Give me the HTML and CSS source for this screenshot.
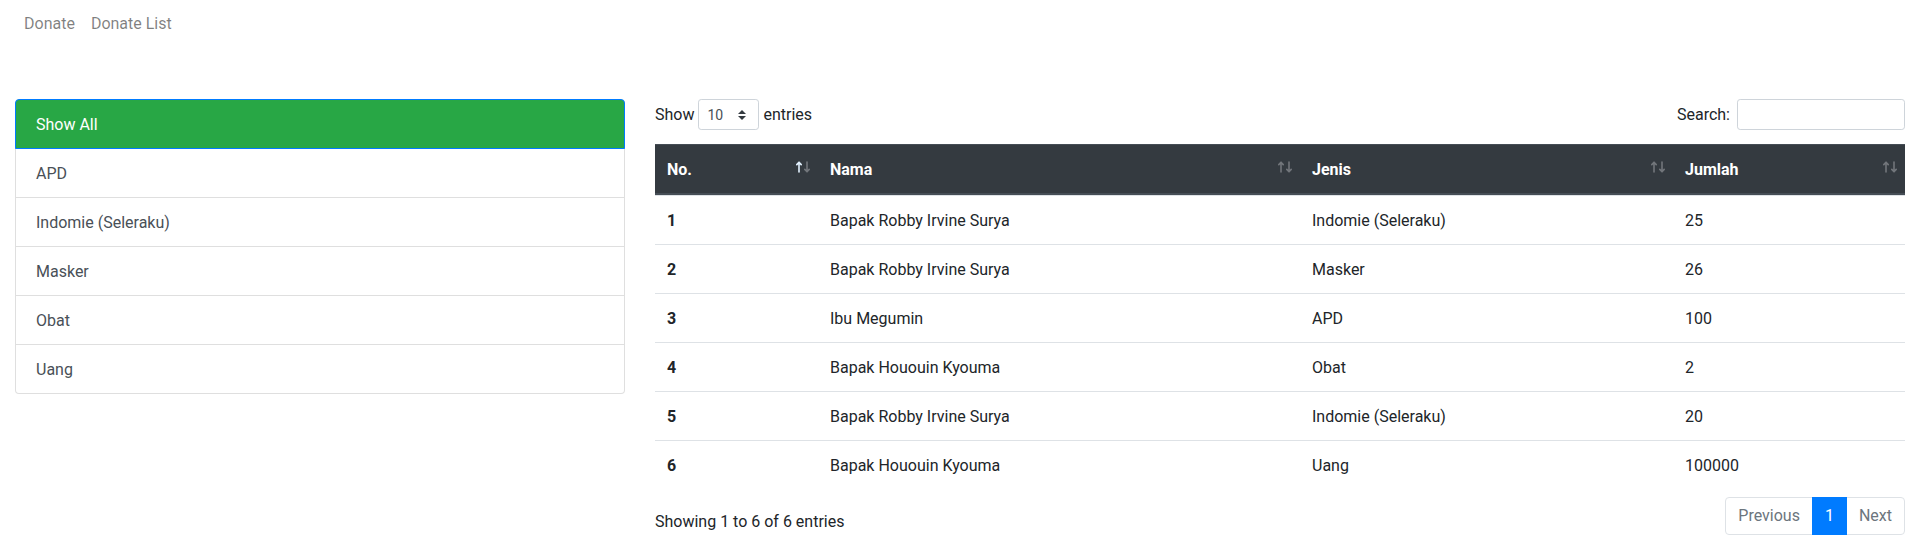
FILE: index.html
```html
<!DOCTYPE html>
<html lang="id">
<head>
<meta charset="utf-8">
<title>Donate List</title>
<link rel="stylesheet" href="styles.css">
</head>
<body>
<nav class="topnav">
  <a class="nav-link" href="#">Donate</a>
  <a class="nav-link" href="#">Donate List</a>
</nav>
<main class="layout">
  <aside class="list-group">
    <a class="list-item active" href="#">Show All</a>
    <a class="list-item" href="#">APD</a>
    <a class="list-item" href="#">Indomie (Seleraku)</a>
    <a class="list-item" href="#">Masker</a>
    <a class="list-item" href="#">Obat</a>
    <a class="list-item" href="#">Uang</a>
  </aside>
  <section class="table-wrap">
    <div class="toolbar">
      <div class="length">
        <span>Show</span>
        <div class="select-sm">
          <span>10</span>
          <svg class="select-arrow" width="8" height="10" viewBox="0 0 4 5"><path d="M2 0L0 2h4zm0 5L0 3h4z" fill="#343a40"/></svg>
        </div>
        <span>entries</span>
      </div>
      <div class="filter">
        <span>Search:</span>
        <div class="input-sm"></div>
      </div>
    </div>
    <table class="data-table">
      <colgroup>
        <col class="c-no"><col class="c-nama"><col class="c-jenis"><col class="c-jumlah">
      </colgroup>
      <thead>
        <tr>
          <th class="sort asc">No.<svg class="sort-icon" width="14" height="12" viewBox="0 0 14 12"><g fill="none" stroke-width="1.6" stroke-linecap="round" stroke-linejoin="round"><path class="up" d="M3 11V1.2M0.8 3.6L3 1.2L5.2 3.6"/><path class="down" d="M11 1V10.8M8.8 8.4L11 10.8L13.2 8.4"/></g></svg></th>
          <th class="sort">Nama<svg class="sort-icon" width="14" height="12" viewBox="0 0 14 12"><g fill="none" stroke-width="1.6" stroke-linecap="round" stroke-linejoin="round"><path class="up" d="M3 11V1.2M0.8 3.6L3 1.2L5.2 3.6"/><path class="down" d="M11 1V10.8M8.8 8.4L11 10.8L13.2 8.4"/></g></svg></th>
          <th class="sort">Jenis<svg class="sort-icon" width="14" height="12" viewBox="0 0 14 12"><g fill="none" stroke-width="1.6" stroke-linecap="round" stroke-linejoin="round"><path class="up" d="M3 11V1.2M0.8 3.6L3 1.2L5.2 3.6"/><path class="down" d="M11 1V10.8M8.8 8.4L11 10.8L13.2 8.4"/></g></svg></th>
          <th class="sort">Jumlah<svg class="sort-icon" width="14" height="12" viewBox="0 0 14 12"><g fill="none" stroke-width="1.6" stroke-linecap="round" stroke-linejoin="round"><path class="up" d="M3 11V1.2M0.8 3.6L3 1.2L5.2 3.6"/><path class="down" d="M11 1V10.8M8.8 8.4L11 10.8L13.2 8.4"/></g></svg></th>
        </tr>
      </thead>
      <tbody>
        <tr><th>1</th><td>Bapak Robby Irvine Surya</td><td>Indomie (Seleraku)</td><td>25</td></tr>
        <tr><th>2</th><td>Bapak Robby Irvine Surya</td><td>Masker</td><td>26</td></tr>
        <tr><th>3</th><td>Ibu Megumin</td><td>APD</td><td>100</td></tr>
        <tr><th>4</th><td>Bapak Hououin Kyouma</td><td>Obat</td><td>2</td></tr>
        <tr><th>5</th><td>Bapak Robby Irvine Surya</td><td>Indomie (Seleraku)</td><td>20</td></tr>
        <tr><th>6</th><td>Bapak Hououin Kyouma</td><td>Uang</td><td>100000</td></tr>
      </tbody>
    </table>
    <div class="footer">
      <div class="info">Showing 1 to 6 of 6 entries</div>
      <ul class="pagination">
        <li class="page-link disabled first">Previous</li>
        <li class="page-link current">1</li>
        <li class="page-link disabled last">Next</li>
      </ul>
    </div>
  </section>
</main>
</body>
</html>
```
FILE: styles.css
```css
* { box-sizing: border-box; }
html, body { margin: 0; padding: 0; }
body {
  font-family: Roboto, "Liberation Sans", Arial, sans-serif;
  font-size: 16px;
  line-height: 24px;
  color: #212529;
  background: #fff;
}
a { text-decoration: none; }

.topnav {
  display: flex;
  padding: 12px 16px 0;
  height: 99px;
}
.nav-link {
  display: block;
  height: 24px;
  padding: 0 8px;
  color: rgba(0, 0, 0, 0.5);
}

.layout {
  display: grid;
  grid-template-columns: 610px 1fr;
  column-gap: 30px;
  padding: 0 15px;
  align-items: start;
}

.list-group { display: flex; flex-direction: column; }
.list-item {
  display: block;
  padding: 13px 20px 11px;
  border: 1px solid rgba(0, 0, 0, 0.125);
  margin-top: -1px;
  color: #495057;
  background: #fff;
}
.list-item:first-child { margin-top: 0; border-radius: 4px 4px 0 0; }
.list-item:last-child { border-radius: 0 0 4px 4px; }
.list-item.active {
  background: #28a745;
  border-color: #007bff;
  color: #fff;
  position: relative;
  z-index: 1;
}

.toolbar {
  display: flex;
  justify-content: space-between;
  align-items: center;
  height: 31px;
  margin-bottom: 14px;
}
.length, .filter { display: flex; align-items: center; }
.length { gap: 4px; }
.filter { gap: 7px; }
.select-sm {
  width: 61px;
  height: 31px;
  border: 1px solid #ced4da;
  border-radius: 3.2px;
  display: flex;
  align-items: center;
  justify-content: space-between;
  padding: 0 12px 0 8px;
  font-size: 14px;
  color: #495057;
}
.input-sm {
  width: 168px;
  height: 31px;
  border: 1px solid #ced4da;
  border-radius: 3.2px;
  background: #fff;
}

.data-table {
  width: 100%;
  table-layout: fixed;
  border-collapse: separate;
  border-spacing: 0;
}
.c-no { width: 163px; }
.c-nama { width: 482px; }
.c-jenis { width: 373px; }
.c-jumlah { width: 232px; }

.data-table th, .data-table td {
  padding: 13px 12px 11px;
  text-align: left;
  vertical-align: top;
  border-top: 1px solid #dee2e6;
}
.data-table tbody th { font-weight: bold; }
.data-table thead th {
  background: #343a40;
  color: #fff;
  font-weight: bold;
  border-top: 1px solid #454d55;
  border-bottom: 2px solid #454d55;
  vertical-align: bottom;
  position: relative;
  padding-right: 30px;
}
.sort-icon {
  position: absolute;
  right: 8px;
  bottom: 20px;
  display: block;
}
.sort-icon path { stroke: #72767b; }
.sort.asc .sort-icon .up { stroke: #e3f2ff; }

.footer {
  display: flex;
  justify-content: space-between;
  align-items: flex-start;
  margin-top: 8px;
}
.info { padding-top: 13px; }
.pagination {
  display: flex;
  list-style: none;
  margin: 0;
  padding: 0;
}
.page-link {
  padding: 8px 12px;
  line-height: 20px;
  border: 1px solid #dee2e6;
  margin-left: -1px;
  color: #007bff;
  background: #fff;
}
.page-link.disabled { color: #6c757d; }
.page-link.first { margin-left: 0; border-radius: 4px 0 0 4px; }
.page-link.last { border-radius: 0 4px 4px 0; }
.page-link.current {
  background: #007bff;
  border-color: #007bff;
  color: #fff;
  position: relative;
  z-index: 1;
}
```
